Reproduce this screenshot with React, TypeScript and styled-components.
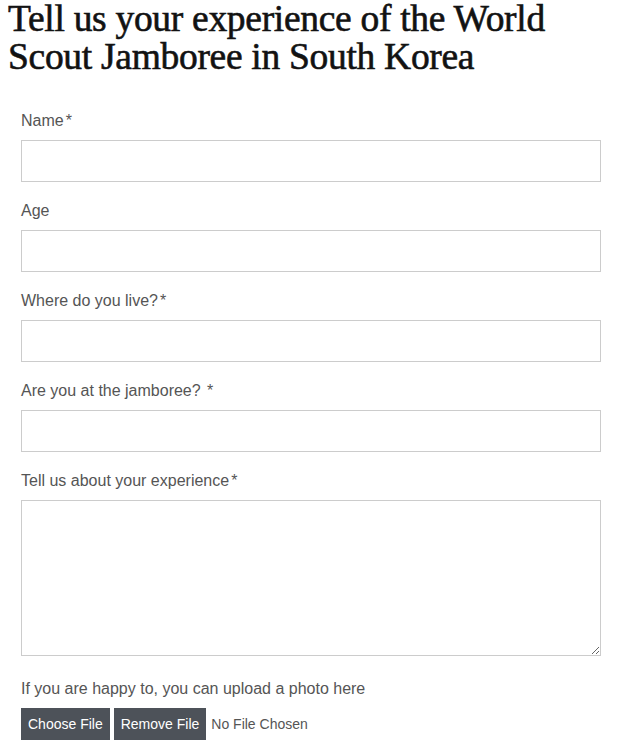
import React from 'react';
import styled, { createGlobalStyle } from 'styled-components';

const GlobalStyle = createGlobalStyle`
  body {
    margin: 0;
    background: #ffffff;
    font-family: 'Liberation Sans', Arial, sans-serif;
  }
`;

const Page = styled.div`
  padding: 0 8px;
`;

const Title = styled.h1`
  margin: 0;
  font-family: 'Liberation Serif', 'DejaVu Serif', serif;
  font-size: 37.5px;
  line-height: 38px;
  font-weight: 400;
  color: #121212;
  letter-spacing: -0.3px;
  -webkit-text-stroke: 0.6px #121212;
`;

const Form = styled.form`
  padding: 34px 11px 0 13px;
  display: flex;
  flex-direction: column;
`;

const Field = styled.div<{ $last?: boolean }>`
  display: flex;
  flex-direction: column;
  gap: 9px;
  margin-bottom: ${(p) => (p.$last ? '22px' : '18px')};
`;

const Label = styled.label`
  padding-top: 1px;
  font-size: 16px;
  line-height: 20px;
  color: #555555;
`;

const Required = styled.span`
  margin-left: 2px;
`;

const TextInput = styled.input`
  display: block;
  box-sizing: border-box;
  width: 100%;
  height: 42px;
  border: 1px solid #cccccc;
  margin: 0;
  padding: 8px;
  font-size: 16px;
  font-family: inherit;
  background: #fff;
  outline: none;
`;

const TextArea = styled.textarea`
  display: block;
  box-sizing: border-box;
  width: 100%;
  height: 156px;
  border: 1px solid #cccccc;
  margin: 0;
  padding: 8px;
  font-size: 16px;
  font-family: inherit;
  resize: vertical;
  outline: none;
`;

const UploadRow = styled.div`
  display: flex;
  align-items: center;
  gap: 4px;
`;

const FileButton = styled.button`
  height: 32px;
  padding: 0 7px;
  border: none;
  background: #4d5259;
  color: #ffffff;
  font-family: 'Liberation Sans', Arial, sans-serif;
  font-size: 14px;
`;

const FileStatus = styled.span`
  margin-left: 1px;
  font-size: 14px;
  color: #555555;
`;

const fields = [
  { label: 'Name', required: true },
  { label: 'Age', required: false },
  { label: 'Where do you live?', required: true },
  { label: 'Are you at the jamboree? ', required: true },
];

export default function App() {
  return (
    <Page>
      <GlobalStyle />
      <Title>
        Tell us your experience of the World
        <br />
        Scout Jamboree in South Korea
      </Title>
      <Form>
        {fields.map((f) => (
          <Field key={f.label}>
            <Label>
              {f.label}
              {f.required && <Required>*</Required>}
            </Label>
            <TextInput type="text" />
          </Field>
        ))}
        <Field $last>
          <Label>
            Tell us about your experience<Required>*</Required>
          </Label>
          <TextArea />
        </Field>
        <Field>
          <Label>If you are happy to, you can upload a photo here</Label>
          <UploadRow>
            <FileButton type="button">Choose File</FileButton>
            <FileButton type="button">Remove File</FileButton>
            <FileStatus>No File Chosen</FileStatus>
          </UploadRow>
        </Field>
      </Form>
    </Page>
  );
}
